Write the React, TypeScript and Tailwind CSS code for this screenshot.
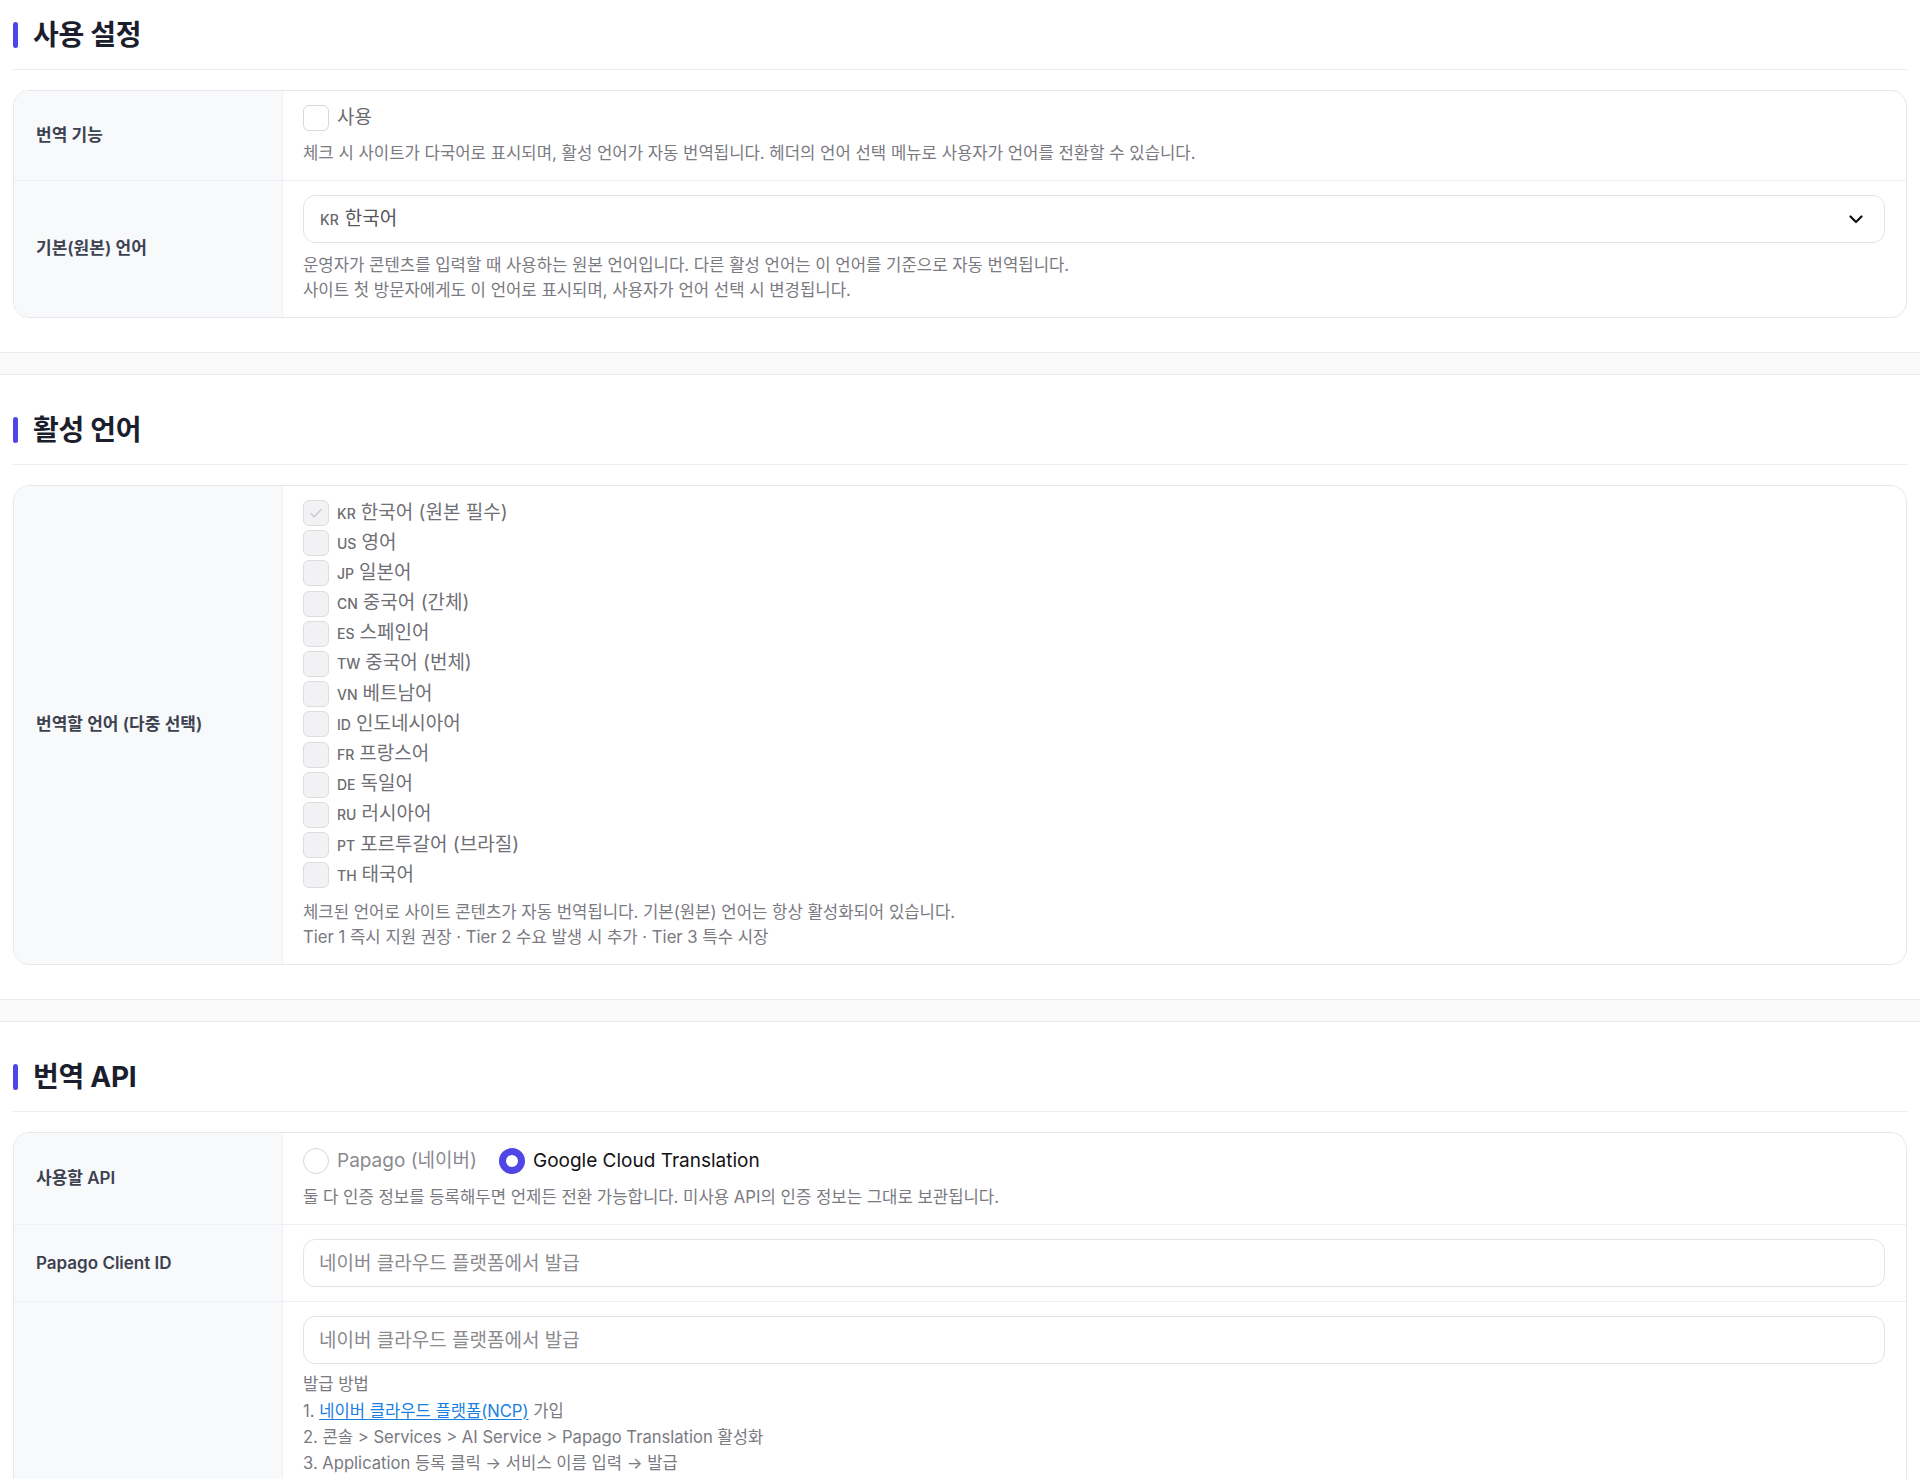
import type { ReactNode } from "react";

type Lang = { code: string; name: string };

const LANGS: Lang[] = [
  { code: "KR", name: "한국어 (원본 필수)" },
  { code: "US", name: "영어" },
  { code: "JP", name: "일본어" },
  { code: "CN", name: "중국어 (간체)" },
  { code: "ES", name: "스페인어" },
  { code: "TW", name: "중국어 (번체)" },
  { code: "VN", name: "베트남어" },
  { code: "ID", name: "인도네시아어" },
  { code: "FR", name: "프랑스어" },
  { code: "DE", name: "독일어" },
  { code: "RU", name: "러시아어" },
  { code: "PT", name: "포르투갈어 (브라질)" },
  { code: "TH", name: "태국어" },
];

function Section({
  title,
  first,
  children,
}: {
  title: string;
  first?: boolean;
  children: ReactNode;
}) {
  return (
    <section className={`px-[13px] pb-[34px] ${first ? "pt-[20px]" : "pt-[40px]"}`}>
      <div className="flex h-[30px] items-center gap-[15px]">
        <span className="h-[26px] w-[5px] rounded-full bg-[#4f46e5]" />
        <h2 className="text-[28px] font-bold leading-[30px] tracking-[-0.01em] text-[#1b1e2c]">
          {title}
        </h2>
      </div>
      <div className="mt-[19px] border-b border-[#ededf0]" />
      <div className="mt-[20px] overflow-hidden rounded-[16px] border border-[#e6e7eb]">
        {children}
      </div>
    </section>
  );
}

function Row({
  label,
  children,
  className = "",
}: {
  label: string;
  children: ReactNode;
  className?: string;
}) {
  return (
    <div className={`flex border-b border-[#eff0f3] last:border-b-0 ${className}`}>
      <div className="flex w-[269px] shrink-0 items-center border-r border-[#f0f1f4] bg-[#f8f9fb] pl-[22px] text-[17px] font-semibold text-[#3d4250]">
        {label}
      </div>
      <div className="min-w-0 flex-1 py-[14px] pl-[20px] pr-[21px]">{children}</div>
    </div>
  );
}

function Desc({ children, className = "" }: { children: ReactNode; className?: string }) {
  return <p className={`text-[16.7px] leading-[25px] text-[#7a7a81] ${className}`}>{children}</p>;
}

function Band() {
  return <div className="h-[23px] border-y border-[#ebebee] bg-[#fafafa]" />;
}

function TextInput({ placeholder }: { placeholder: string }) {
  return (
    <input
      type="text"
      placeholder={placeholder}
      className="h-[48px] w-full rounded-[12px] border border-[#e2e3e7] bg-white px-[15px] text-[19px] text-[#333] outline-none placeholder:text-[#8a8a8f]"
    />
  );
}

export default function App() {
  return (
    <div className="min-h-screen bg-white font-['Inter','Noto_Sans_CJK_KR',sans-serif]">
      <Section title="사용 설정" first>
        <Row label="번역 기능">
          <label className="flex h-[26px] items-center gap-2">
            <span className="h-[26px] w-[26px] rounded-[6px] border border-[#d7d8dc] bg-white" />
            <span className="text-[19px] text-[#6b6b70]">사용</span>
          </label>
          <Desc className="mt-[10px]">
            체크 시 사이트가 다국어로 표시되며, 활성 언어가 자동 번역됩니다. 헤더의 언어 선택 메뉴로 사용자가 언어를 전환할 수 있습니다.
          </Desc>
        </Row>
        <Row label="기본(원본) 언어">
          <div className="flex h-[48px] items-center justify-between rounded-[12px] border border-[#e2e3e7] bg-white pl-[16px] pr-[21px]">
            <span className="text-[19px] text-[#55555b]">
              <span className="mr-[6px] text-[14px] font-medium text-[#66666c]">KR</span>
              한국어
            </span>
            <svg width="14" height="9" viewBox="0 0 14 9" fill="none">
              <path d="M1.5 1.5 7 7l5.5-5.5" stroke="#111" strokeWidth="2.2" strokeLinecap="round" strokeLinejoin="round" />
            </svg>
          </div>
          <Desc className="mt-[10px]">
            운영자가 콘텐츠를 입력할 때 사용하는 원본 언어입니다. 다른 활성 언어는 이 언어를 기준으로 자동 번역됩니다.
            <br />
            사이트 첫 방문자에게도 이 언어로 표시되며, 사용자가 언어 선택 시 변경됩니다.
          </Desc>
        </Row>
      </Section>

      <Band />

      <Section title="활성 언어">
        <Row label="번역할 언어 (다중 선택)">
          <div className="flex flex-col gap-[4.2px]">
            {LANGS.map((lang, i) => (
              <label key={lang.code} className="flex h-[26px] items-center gap-2">
                <span className="flex h-[26px] w-[26px] shrink-0 items-center justify-center rounded-[6px] border border-[#dddde0] bg-[#f2f2f4]">
                  {i === 0 && (
                    <svg width="18" height="18" viewBox="0 0 24 24" fill="none">
                      <path d="M5 12.5l4.5 4.5L19 7.5" stroke="#c6c6ca" strokeWidth="1.8" strokeLinecap="round" strokeLinejoin="round" />
                    </svg>
                  )}
                </span>
                <span className="text-[19px] leading-[26px] text-[#6f6f75]">
                  <span className="mr-[5px] text-[14px] font-medium text-[#6c6c72]">{lang.code}</span>
                  {lang.name}
                </span>
              </label>
            ))}
          </div>
          <Desc className="mt-[12px]">
            체크된 언어로 사이트 콘텐츠가 자동 번역됩니다. 기본(원본) 언어는 항상 활성화되어 있습니다.
            <br />
            Tier 1 즉시 지원 권장 · Tier 2 수요 발생 시 추가 · Tier 3 특수 시장
          </Desc>
        </Row>
      </Section>

      <Band />

      <Section title="번역 API">
        <Row label="사용할 API">
          <div className="flex h-[28px] items-center">
            <label className="flex items-center gap-2">
              <span className="h-[26px] w-[26px] rounded-full border border-[#d6d7db] bg-white" />
              <span className="text-[19px] text-[#8a8a90]">Papago (네이버)</span>
            </label>
            <label className="ml-[22px] flex items-center gap-2">
              <span className="h-[26px] w-[26px] rounded-full border-[7px] border-[#4f46e5] bg-white" />
              <span className="text-[19px] text-[#111114]">Google Cloud Translation</span>
            </label>
          </div>
          <Desc className="mt-[10px]">
            둘 다 인증 정보를 등록해두면 언제든 전환 가능합니다. 미사용 API의 인증 정보는 그대로 보관됩니다.
          </Desc>
        </Row>
        <Row label="Papago Client ID">
          <TextInput placeholder="네이버 클라우드 플랫폼에서 발급" />
        </Row>
        <Row label="Papago Client Secret" className="min-h-[376px]">
          <TextInput placeholder="네이버 클라우드 플랫폼에서 발급" />
          <div className="mt-[7px] text-[16.6px] leading-[26.4px] text-[#7a7a81]">
            <p>발급 방법</p>
            <p>
              1.{" "}
              <a href="#" className="text-[#1a7fe3] underline underline-offset-2">
                네이버 클라우드 플랫폼(NCP)
              </a>{" "}
              가입
            </p>
            <p>2. 콘솔 &gt; Services &gt; AI Service &gt; Papago Translation 활성화</p>
            <p>3. Application 등록 클릭 → 서비스 이름 입력 → 발급</p>
          </div>
        </Row>
      </Section>
    </div>
  );
}
